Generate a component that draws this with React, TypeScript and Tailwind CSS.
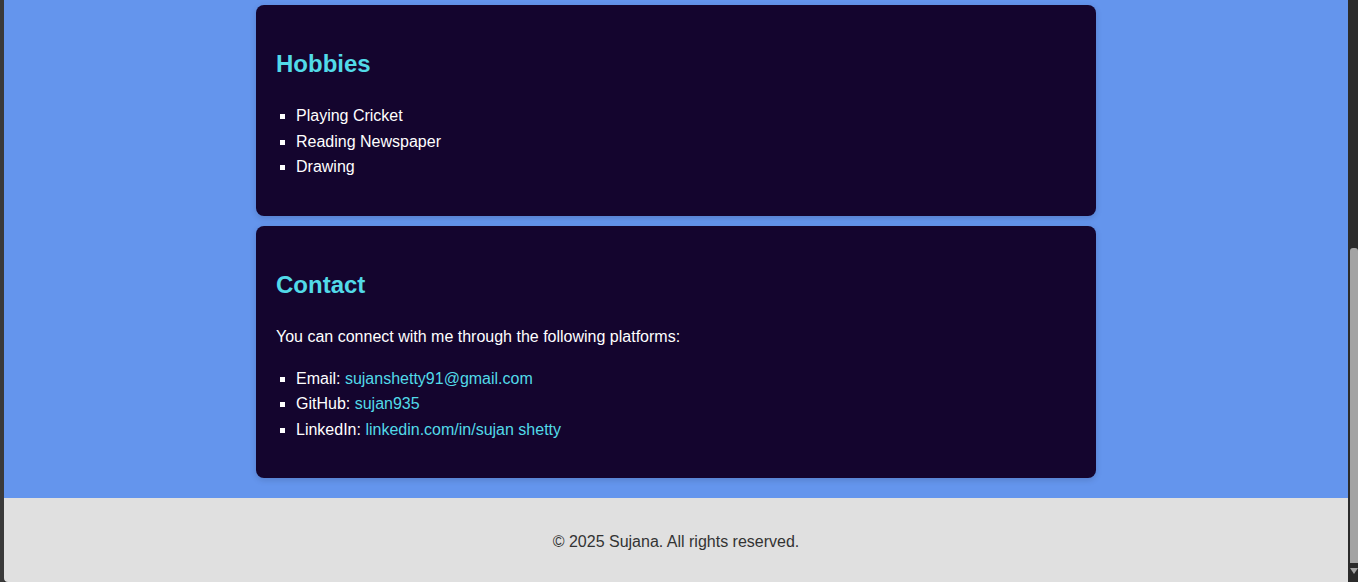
import React from "react";

const font = { fontFamily: '"Liberation Sans", Arial, sans-serif' };

export default function App() {
  return (
    <div className="flex h-[582px] w-[1358px] overflow-hidden bg-[#2b2b2b]" style={font}>
      <div className="w-[4px] shrink-0 bg-[#3a3a3a]" />
      <div className="flex flex-1 flex-col overflow-hidden rounded-bl-[4px] leading-[1.6] text-[16px]">
        <main className="flex flex-col items-center gap-[10px] bg-[#6495ed] pt-[5px] pb-[20px]">
          <section className="w-[840px] rounded-[8px] bg-[#14052e] px-[20px] py-[20px] text-white shadow-[0_2px_6px_rgba(0,0,0,0.15)]">
            <h2 className="my-[19.92px] text-[24px] font-bold text-[#52dae8]">Hobbies</h2>
            <ul className="my-[16px] list-[square] pl-[20px]">
              <li>Playing Cricket</li>
              <li>Reading Newspaper</li>
              <li>Drawing</li>
            </ul>
          </section>
          <section className="w-[840px] rounded-[8px] bg-[#14052e] px-[20px] pt-[20px] pb-[19px] text-white shadow-[0_2px_6px_rgba(0,0,0,0.15)]">
            <h2 className="mt-[19.92px] text-[24px] font-bold text-[#52dae8]">Contact</h2>
            <p className="mt-[19.92px]">You can connect with me through the following platforms:</p>
            <ul className="my-[16px] list-[square] pl-[20px]">
              <li>
                Email: <a className="text-[#52dae8]">sujanshetty91@gmail.com</a>
              </li>
              <li>
                GitHub: <a className="text-[#52dae8]">sujan935</a>
              </li>
              <li>
                LinkedIn: <a className="text-[#52dae8]">linkedin.com/in/sujan shetty</a>
              </li>
            </ul>
          </section>
        </main>
        <footer className="flex-1 bg-[#e0e0e0] pt-[31px] text-center text-[#333333]">
          <p>© 2025 Sujana. All rights reserved.</p>
        </footer>
      </div>
      <div className="flex w-[10px] shrink-0 flex-col bg-[#2b2b2b]">
        <div className="h-[248px]" />
        <div className="ml-[2px] h-[315px] w-[8px] rounded-t-[3px] bg-[#a3a3a3]" />
        <div className="mt-[5px] flex justify-center pl-[2px]">
          <svg width="8" height="6" viewBox="0 0 8 6">
            <path d="M0 0 H8 L4 6 Z" fill="#a3a3a3" />
          </svg>
        </div>
      </div>
    </div>
  );
}
